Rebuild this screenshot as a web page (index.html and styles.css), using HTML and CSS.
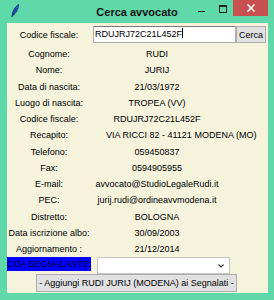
FILE: index.html
```html
<!DOCTYPE html>
<html lang="it">
<head>
    <meta charset="UTF-8">
    <title>Cerca avvocato</title>
    <link rel="stylesheet" href="styles.css">
</head>
<body>
    <div class="window">
        <div class="titlebar">
            <div class="tb-left">
                <svg class="app-icon" width="8" height="13" viewBox="0 0 8 13">
                    <path d="M1 12.5 C1.2 8 3.5 3 7.5 0.5 C7.6 5 5 9.5 1.6 11.6 Z" fill="#2f62d8" stroke="#122c6a" stroke-width="0.8"/>
                    <path d="M1 12.8 L5.5 4" stroke="#0b1d4a" stroke-width="0.7"/>
                </svg>
            </div>
            <div class="title">Cerca avvocato</div>
            <div class="controls">
                <div class="ctl-min"><span></span></div>
                <div class="ctl-max"><span></span></div>
                <div class="ctl-close">
                    <svg width="8" height="8" viewBox="0 0 8 8">
                        <path d="M0.5 0.5 L7.5 7.5 M7.5 0.5 L0.5 7.5" stroke="#fff" stroke-width="1.5"/>
                    </svg>
                </div>
            </div>
        </div>
        <div class="client">
            <div class="search-row">
                <span class="label">Codice fiscale:</span>
                <div class="entry">RDUJRJ72C21L452F<span class="caret"></span></div>
                <button class="btn btn-search">Cerca</button>
            </div>

            <div class="details">
                <span class="label">Cognome:</span><span class="value">RUDI</span>
                <span class="label">Nome:</span><span class="value">JURIJ</span>
                <span class="label">Data di nascita:</span><span class="value">21/03/1972</span>
                <span class="label">Luogo di nascita:</span><span class="value">TROPEA (VV)</span>
                <span class="label">Codice fiscale:</span><span class="value">RDUJRJ72C21L452F</span>
                <span class="label">Recapito:</span><span class="value value-wide">VIA RICCI 82 - 41121 MODENA (MO)</span>
                <span class="label">Telefono:</span><span class="value">059450837</span>
                <span class="label">Fax:</span><span class="value">0594905955</span>
                <span class="label">E-mail:</span><span class="value">avvocato@StudioLegaleRudi.it</span>
                <span class="label">PEC:</span><span class="value">jurij.rudi@ordineavvmodena.it</span>
                <span class="label">Distretto:</span><span class="value">BOLOGNA</span>
                <span class="label">Data iscrizione albo:</span><span class="value">30/09/2003</span>
                <span class="label">Aggiornamento :</span><span class="value">21/12/2014</span>
            </div>

            <div class="coa-row">
                <span class="coa-label">COA SEGNALANTE:</span>
                <div class="combo">
                    <svg class="chevron" width="6" height="4" viewBox="0 0 6 4">
                        <path d="M0.5 0.5 L3 3 L5.5 0.5" fill="none" stroke="#333" stroke-width="1.1"/>
                    </svg>
                </div>
            </div>

            <div class="add-row">
                <button class="btn btn-add">- Aggiungi RUDI JURIJ (MODENA) ai Segnalati -</button>
            </div>
        </div>
    </div>
</body>
</html>
```

FILE: styles.css
```css
body {
    margin: 0;
    font-family: "Liberation Sans", Arial, sans-serif;
    font-size: 9px;
    color: #000;
}
.window {
    width: 274px;
    height: 300px;
    background-color: #5fd9a9;
    display: flex;
    flex-direction: column;
}

/* title bar */
.titlebar {
    height: 23px;
    display: grid;
    grid-template-columns: 1fr auto 1fr;
}
.tb-left {
    padding: 4px 0 0 11px;
}
.app-icon {
    display: block;
}
.title {
    font-size: 11px;
    font-weight: bold;
    line-height: 24px;
    color: #111;
}
.controls {
    display: flex;
    justify-content: flex-end;
    align-items: flex-start;
    margin-right: 6px;
}
.ctl-min {
    width: 22px;
    height: 16px;
    display: flex;
    justify-content: center;
}
.ctl-min span {
    width: 7px;
    height: 1px;
    margin-top: 11px;
    background-color: #222;
}
.ctl-max {
    width: 21px;
    height: 16px;
    display: flex;
    justify-content: center;
}
.ctl-max span {
    width: 6px;
    height: 5px;
    margin-top: 5px;
    border: 1px solid #222;
    border-top-width: 2px;
}
.ctl-close {
    width: 35px;
    height: 16px;
    background-color: #c75050;
    display: flex;
    align-items: center;
    justify-content: center;
}

/* client area */
.client {
    flex: 1;
    margin: 0 6px 7px 7px;
    background-color: #f5f3dc;
    display: flex;
    flex-direction: column;
}
.label {
    text-align: center;
    white-space: nowrap;
}
.search-row {
    margin-top: 3px;
    display: grid;
    grid-template-columns: 84px 2px 143px 30px;
    height: 17px;
    align-items: center;
}
.search-row .label {
    grid-column: 1;
}
.entry {
    grid-column: 3;
    height: 17px;
    box-sizing: border-box;
    background-color: #fff;
    border: 1px solid #abadb3;
    border-top-color: #7a7a7a;
    line-height: 15px;
    padding-left: 1px;
    white-space: nowrap;
    overflow: hidden;
}
.caret {
    display: inline-block;
    width: 1px;
    height: 10px;
    background-color: #000;
    vertical-align: -1px;
}
.btn {
    font-family: inherit;
    font-size: 9px;
    color: #000;
    background-color: #e1e1e1;
    border: 1px solid #adadad;
    padding: 0;
    margin: 0;
}
.btn-search {
    grid-column: 4;
    height: 17px;
}

.details {
    margin-top: 3px;
    display: grid;
    grid-template-columns: 84px 132px;
    grid-auto-rows: 16.25px;
    align-items: center;
}
.value {
    text-align: center;
    white-space: nowrap;
}
.value-wide {
    text-align: left;
    padding-left: 15px;
}

.coa-row {
    display: flex;
    align-items: flex-start;
    gap: 6px;
    height: 17px;
}
.coa-label {
    width: 84px;
    height: 14px;
    line-height: 14px;
    background-color: #0000ff;
    color: #000033;
    text-align: center;
    white-space: nowrap;
}
.combo {
    width: 133px;
    height: 17px;
    box-sizing: border-box;
    background-color: #fff;
    border: 1px solid #c5c5c5;
    display: flex;
    justify-content: flex-end;
    align-items: center;
    padding-right: 5px;
}
.add-row {
    padding-left: 29px;
}
.btn-add {
    width: 201px;
    height: 18px;
}
```
